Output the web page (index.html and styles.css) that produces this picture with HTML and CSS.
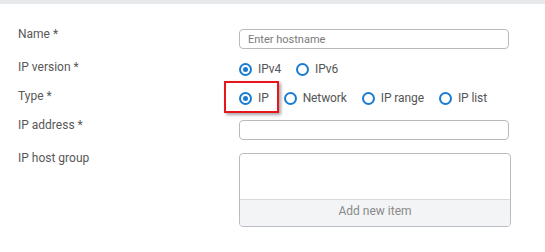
FILE: index.html
```html
<!DOCTYPE html>
<html lang="en">
<head>
  <meta charset="UTF-8" />
  <title>Add IP host</title>
  <link rel="stylesheet" href="styles.css">
</head>
<body>
  <div class="topbar"></div>
  <div class="form">
    <div class="row">
      <div class="label">Name *</div>
      <input class="field" type="text" placeholder="Enter hostname">
    </div>

    <div class="row">
      <div class="label">IP version *</div>
      <div class="radios">
        <label class="option"><span class="radio checked"></span>IPv4</label>
        <label class="option"><span class="radio"></span>IPv6</label>
      </div>
    </div>

    <div class="row">
      <div class="label">Type *</div>
      <div class="radios">
        <label class="option highlight"><span class="radio checked"></span>IP</label>
        <label class="option"><span class="radio"></span>Network</label>
        <label class="option"><span class="radio"></span>IP range</label>
        <label class="option"><span class="radio"></span>IP list</label>
      </div>
    </div>

    <div class="row">
      <div class="label">IP address *</div>
      <input class="field" type="text">
    </div>

    <div class="row">
      <div class="label">IP host group</div>
      <div class="group">
        <div class="group-list"></div>
        <div class="group-add">Add new item</div>
      </div>
    </div>
  </div>
</body>
</html>
```

FILE: styles.css
```css
body {
  font-family: Roboto, 'Liberation Sans', sans-serif;
  font-size: 12px;
  color: #555;
  margin: 0;
  padding: 0;
  background: #fff;
}
.topbar {
  height: 4px;
  background: #e7e8ea;
}
.form {
  padding: 21px 0 0 18px;
  display: flex;
  flex-direction: column;
  gap: 9px;
}
.row {
  display: grid;
  grid-template-columns: 221px 1fr;
  align-items: start;
}
.label {
  line-height: 18px;
  color: #585858;
}
.field {
  box-sizing: border-box;
  width: 270px;
  height: 20px;
  margin-top: 4px;
  padding: 0 8px;
  border: 1px solid #b7bbc0;
  border-radius: 4px;
  font-family: inherit;
  font-size: 11px;
  color: #333;
  outline: none;
}
.field::placeholder {
  color: #7a7a7a;
}
.radios {
  display: flex;
  gap: 15px;
  margin-top: 2px;
  line-height: 18px;
}
.option {
  position: relative;
  display: flex;
  align-items: center;
  gap: 6px;
  color: #555;
  letter-spacing: -0.1px;
}
.radio {
  box-sizing: border-box;
  width: 13px;
  height: 13px;
  border: 2px solid #1a7cd1;
  border-radius: 50%;
  display: flex;
  align-items: center;
  justify-content: center;
}
.radio.checked::after {
  content: "";
  width: 5px;
  height: 5px;
  border-radius: 50%;
  background: #1a7cd1;
}
.highlight::before {
  content: "";
  position: absolute;
  left: -15px;
  top: -8px;
  width: 55px;
  height: 32px;
  box-sizing: border-box;
  border: 2px solid #e8161b;
  box-shadow: 2px 2px 3px rgba(0, 0, 0, 0.35);
}
.group {
  box-sizing: border-box;
  width: 272px;
  margin-top: 4px;
  border: 1px solid #b9bdc2;
  border-radius: 4px;
  overflow: hidden;
}
.group-list {
  height: 45px;
  border-bottom: 1px solid #d8dadd;
}
.group-add {
  height: 26px;
  line-height: 22px;
  text-align: center;
  background: #f3f4f6;
  color: #8a8a8a;
}
```
